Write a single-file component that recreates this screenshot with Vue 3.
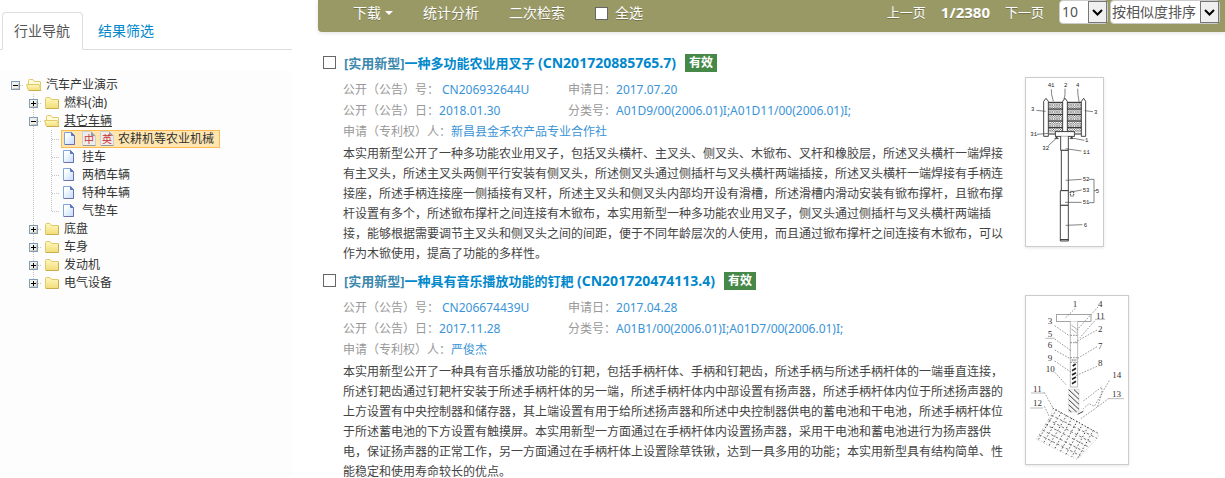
<script setup>
import { ref } from 'vue'

const tree = [
  { text: '汽车产业演示', cells: ['root'], icon: 'open' },
  { text: '燃料(油)', cells: ['none', 'plus'], icon: 'closed' },
  { text: '其它车辆', cells: ['none', 'minus'], icon: 'open', underline: true },
  { text: '农耕机等农业机械', cells: ['none', 'line', 'tee'], icon: 'doc', selected: true },
  { text: '挂车', cells: ['none', 'line', 'tee'], icon: 'doc' },
  { text: '两栖车辆', cells: ['none', 'line', 'tee'], icon: 'doc' },
  { text: '特种车辆', cells: ['none', 'line', 'tee'], icon: 'doc' },
  { text: '气垫车', cells: ['none', 'line', 'end'], icon: 'doc' },
  { text: '底盘', cells: ['none', 'plus'], icon: 'closed' },
  { text: '车身', cells: ['none', 'plus'], icon: 'closed' },
  { text: '发动机', cells: ['none', 'plus'], icon: 'closed' },
  { text: '电气设备', cells: ['none', 'last'], icon: 'closed' },
]

const vertical = { line: 18, tee: 18, plus: 18, minus: 18, end: 10, last: 10 }
const isSwitch = (c) => ['root', 'plus', 'minus', 'last'].includes(c)
const isOpen = (c) => c === 'root' || c === 'minus'

const results = [
  {
    id: 'r1',
    title: '一种多功能农业用叉子',
    number: '(CN201720885765.7)',
    pubNo: 'CN206932644U',
    applied: '2017.07.20',
    pubDate: '2018.01.30',
    classes: 'A01D9/00(2006.01)I;A01D11/00(2006.01)I;',
    owner: '新昌县金禾农产品专业合作社',
    text: '本实用新型公开了一种多功能农业用叉子，包括叉头横杆、主叉头、侧叉头、木锨布、叉杆和橡胶层，所述叉头横杆一端焊接有主叉头，所述主叉头两侧平行安装有侧叉头，所述侧叉头通过侧插杆与叉头横杆两端插接，所述叉头横杆一端焊接有手柄连接座，所述手柄连接座一侧插接有叉杆，所述主叉头和侧叉头内部均开设有滑槽，所述滑槽内滑动安装有锨布撑杆，且锨布撑杆设置有多个，所述锨布撑杆之间连接有木锨布，本实用新型一种多功能农业用叉子，侧叉头通过侧插杆与叉头横杆两端插接，能够根据需要调节主叉头和侧叉头之间的间距，便于不同年龄层次的人使用，而且通过锨布撑杆之间连接有木锨布，可以作为木锨使用，提高了功能的多样性。',
  },
  {
    id: 'r2',
    title: '一种具有音乐播放功能的钉耙',
    number: '(CN201720474113.4)',
    pubNo: 'CN206674439U',
    applied: '2017.04.28',
    pubDate: '2017.11.28',
    classes: 'A01B1/00(2006.01)I;A01D7/00(2006.01)I;',
    owner: '严俊杰',
    text: '本实用新型公开了一种具有音乐播放功能的钉耙，包括手柄杆体、手柄和钉耙齿，所述手柄与所述手柄杆体的一端垂直连接，所述钉耙齿通过钉耙杆安装于所述手柄杆体的另一端，所述手柄杆体内中部设置有扬声器，所述手柄杆体内位于所述扬声器的上方设置有中央控制器和储存器，其上端设置有用于给所述扬声器和所述中央控制器供电的蓄电池和干电池，所述手柄杆体位于所述蓄电池的下方设置有触摸屏。本实用新型一方面通过在手柄杆体内设置扬声器，采用干电池和蓄电池进行为扬声器供电，保证扬声器的正常工作，另一方面通过在手柄杆体上设置除草铁锹，达到一具多用的功能；本实用新型具有结构简单、性能稳定和使用寿命较长的优点。',
  },
]

const forkLabels = [
  ['41', 98, 51], ['2', 147, 51], ['4', 183, 51], ['3', 48, 122], ['3', 237, 131], ['31', 46, 198],
  ['32', 82, 239], ['1', 210, 216], ['11', 204, 251], ['52', 203, 333], ['53', 203, 365], ['51', 203, 403],
  ['5', 242, 368], ['6', 206, 470],
]
const rakeLabels = [
  ['1', 173, 67], ['4', 249, 67], ['3', 98, 117], ['11', 243, 101], ['5', 98, 157], ['2', 249, 140],
  ['6', 98, 188], ['7', 249, 192], ['9', 98, 227], ['8', 249, 242], ['10', 92, 262], ['14', 292, 279],
  ['11', 54, 320], ['13', 291, 335], ['12', 54, 364],
]

const pageSize = ref('10')
const order = ref('sim')
</script>

<template>
  <div class="page">
    <svg class="defs" width="0" height="0" aria-hidden="true">
      <defs>
        <linearGradient id="folder" x1="0" y1="0" x2="0" y2="1">
          <stop offset="0" stop-color="#fff8bd" />
          <stop offset="1" stop-color="#f1dc78" />
        </linearGradient>
        <linearGradient id="sheet" x1="0" y1="0" x2="1" y2="1">
          <stop offset="0.2" stop-color="#fff" />
          <stop offset="1" stop-color="#bfdcff" />
        </linearGradient>
      </defs>
    </svg>
    <aside class="side">
      <nav class="tabs">
        <a class="tab active" href="#nav">行业导航</a>
        <a class="tab" href="#filter">结果筛选</a>
      </nav>
      <ul class="tree">
        <li v-for="n in tree" :key="n.text" class="node">
          <svg v-for="(c, i) in n.cells" :key="i" class="cell" viewBox="0 0 18 18" shape-rendering="crispEdges">
            <path v-if="vertical[c]" :d="`M9.5 0V${vertical[c]}`" class="dots" />
            <path v-if="c !== 'none' && c !== 'line'" d="M10 9.5H18" class="dots" />
            <g v-if="isSwitch(c)">
              <rect x="5.5" y="5.5" width="8" height="8" fill="#f1f0ea" stroke="#7f9db9" />
              <path d="M7 12.5H13M12.5 7V13" stroke="#d0cabb" fill="none" />
              <path d="M7 9.5H12" stroke="#000" />
              <path v-if="!isOpen(c)" d="M9.5 7V12" stroke="#000" />
            </g>
          </svg>
          <a href="#node" class="label" :class="{ selected: n.selected, underline: n.underline }">
            <svg v-if="n.icon === 'closed'" class="icon" viewBox="0 0 18 18">
              <path d="M2.5 4.500q0-1 1-1H7l1.500 2h6.500q.5 0 .5.500v8q0 .5-.5.500H3q-.5 0-.5-.5z" fill="url(#folder)" stroke="#e0c96a" />
              <path d="M3 14.500H15.500V6" fill="none" stroke="#cdae4c" />
            </svg>
            <svg v-else-if="n.icon === 'open'" class="icon" viewBox="0 0 18 18">
              <path d="M3.500 12V4.500q0-1 1-1H8l1.500 2h5.500q.5 0 .5.500V13z" fill="#fffbd6" stroke="#e0c96a" />
              <path d="M1.500 8.500H14l2 5.500q0 .5-.5.500H4q-.6 0-.8-.5z" fill="url(#folder)" stroke="#e0c96a" />
              <path d="M4 14.500H16" stroke="#cdae4c" />
            </svg>
            <svg v-else class="icon" viewBox="0 0 18 18">
              <path d="M2.500 2.500H9.500L12.500 5.500V14.500H2.500z" fill="url(#sheet)" stroke="#7fa6dc" />
              <path d="M9.500 2.500V5.500H12.500z" fill="#5f78bd" stroke="#5f78bd" />
              <path d="M12.500 6V14.500H3" fill="none" stroke="#6f70a8" />
            </svg>
            <template v-if="n.selected">
              <svg v-for="g in ['中', '英']" :key="g" class="icon" viewBox="0 0 18 18">
                <path d="M2.500 1.500H11L15.500 6V15.500H2.500z" fill="#ececec" stroke="#cfcfcf" />
                <path d="M11 1.500V6H15.500z" fill="#9a9a9a" />
                <path d="M3 15.500H15.500" stroke="#999" />
                <text x="4" y="13" class="glyph">{{ g }}</text>
              </svg>
            </template>
            <span class="name">{{ n.text }}</span>
          </a>
        </li>
      </ul>
    </aside>

    <main class="main">
      <header class="bar">
        <div class="tools">
          <a href="#download" class="download">下载<i class="caret"></i></a>
          <a href="#stats">统计分析</a>
          <a href="#refine">二次检索</a>
          <label class="all"><input type="checkbox" class="check" />全选</label>
        </div>
        <div class="pager">
          <a href="#prev">上一页</a>
          <strong>1/2380</strong>
          <a href="#next">下一页</a>
          <div class="selects">
            <div class="pick small">
              <select v-model="pageSize" aria-label="每页条数"><option value="10">10</option></select>
              <svg class="arrow" viewBox="0 0 17 20"><path d="M4 8L8.500 12.500L13 8" /></svg>
            </div>
            <div class="pick">
              <select v-model="order" aria-label="排序"><option value="sim">按相似度排序</option></select>
              <svg class="arrow" viewBox="0 0 17 20"><path d="M4 8L8.500 12.500L13 8" /></svg>
            </div>
          </div>
        </div>
      </header>

      <article v-for="(r, i) in results" :key="r.id" class="item">
        <input :id="r.id" type="checkbox" class="check" :aria-label="r.title" />
        <div class="body">
          <h3 class="title">
            <a href="#detail"><span class="kind">[实用新型]</span>{{ r.title }} <span class="num">{{ r.number }}</span></a>
            <span class="badge">有效</span>
          </h3>
          <dl class="meta">
            <div><dt>公开（公告）号：</dt><dd class="spaced">{{ r.pubNo }}</dd></div>
            <div><dt>申请日：</dt><dd>{{ r.applied }}</dd></div>
            <div><dt>公开（公告）日：</dt><dd>{{ r.pubDate }}</dd></div>
            <div><dt>分类号：</dt><dd>{{ r.classes }}</dd></div>
            <div class="wide"><dt>申请（专利权）人：</dt><dd>{{ r.owner }}</dd></div>
          </dl>
          <p class="text">{{ r.text }}</p>
        </div>
        <div class="figure">
          <svg v-if="i === 0" class="fig fork" viewBox="33 24 231 504">
            <defs>
              <pattern id="hatch" width="7" height="7" patternUnits="userSpaceOnUse">
                <path d="M0 7L7 0M0 0L7 7" stroke="#555" stroke-width="1.500" />
              </pattern>
            </defs>
            <rect x="100" y="97" width="100" height="90" fill="url(#hatch)" />
            <path d="M100 97H200M100 117H200M100 134H200M100 153H200M100 173H200" stroke="#222" stroke-width="3" />
            <g fill="#fff" stroke="#222" stroke-width="2.500">
              <path d="M86 199V94l7-9l7 9V199z" />
              <path d="M199 199V94l7-9l6 9V199z" />
              <path d="M143 187V94l7-9l7 9V187z" />
              <rect x="121" y="185" width="57" height="14" />
              <path d="M137 199V241H160V199" />
              <path d="M139 241V362H160V241z" />
              <path d="M136 362H160V406H136z" />
              <path d="M136 406H160V513H136z" />
              <path d="M166 364h10v14h-10z" stroke-dasharray="4 2" />
            </g>
            <path d="M136 509H160M102 192H120M180 192H198" stroke="#222" stroke-width="3" />
            <path d="M119 206l6-6l6 6zM164 206l6-6l6 6z" fill="#333" stroke="#222" />
            <path d="M109 58l1 16l5 20M150 56v18l-3 14M188 56l1 20l4 24M64 121l28 3M209 122l25 3M66 193l34-3M100 227l22-20M176 205l32 6M152 236l47 7M152 331l48-3M163 367l37-7M150 397h50M152 466l50-2M222 328H237V398H222M237 362h6" fill="none" stroke="#444" stroke-width="2" />
            <text v-for="(l, k) in forkLabels" :key="k" :x="l[1]" :y="l[2]" class="fork-label">{{ l[0] }}</text>
          </svg>
          <svg v-else class="fig rake" viewBox="33 33 306 504">
            <g fill="#fff" stroke="#999" stroke-width="2">
              <rect x="124" y="89" width="104" height="20" stroke="#777" />
              <path d="M166 109V306H188V109" />
              <path d="M166 151H188M166 173H188M166 218H188M166 232H188" stroke="#555" stroke-dasharray="5 3" />
            </g>
            <path d="M169 120l16 12M169 132l16 12M169 225h16M172 223v6M180 223v6" stroke="#888" stroke-width="2" />
            <path d="M173 243l9-6M171 257l12-7M171 270l12-7M171 283l12-7M171 296l12-7" stroke="#222" stroke-width="5" />
            <path d="M161 313H192V381H161z" fill="#f5f5f5" stroke="#aaa" />
            <path d="M161 314l31 29M161 329l31 29M161 344l31 29M161 359l24 22M161 374l8 7M177 314l15 14" stroke="#444" stroke-width="3" />
            <path d="M181 70L150 100M249 66L183 138M244 102L195 158M246 135L180 172M119 122L164 153M119 162L168 197M119 195L164 220M246 185L188 220M119 228L172 264M246 244L183 272M119 262L153 299M283 287L261 324L247 366M282 340L247 366L196 402M205 348L260 306L261 324L238 364L222 356L205 371M88 322L114 369M88 364L104 396" fill="none" stroke="#666" stroke-width="2" stroke-dasharray="5 4" />
            <path d="M91 160H119M245 103H270M48 324H88M46 369H84M282 341H327" stroke="#999" stroke-width="2" />
            <path d="M113 369L251 447L247 460L186 524L64 463L109 388z" fill="#fafafa" stroke="#bbb" stroke-width="2" stroke-dasharray="4 5" />
            <g stroke="#444" stroke-width="3">
              <path d="M113 369L250 445M124 374L70 464M139 382L86 473M155 391L102 482M171 399L119 491M187 408L136 500M203 417L153 508M219 426L170 516M235 436L186 523" stroke-dasharray="4 6" />
              <path d="M108 390L246 460M100 404L231 473M91 418L219 485M82 435L206 499M72 449L196 512" stroke-dasharray="8 7" stroke="#777" />
              <path d="M188 388L205 379" />
            </g>
            <text v-for="(l, k) in rakeLabels" :key="k" :x="l[1]" :y="l[2]" class="rake-label">{{ l[0] }}</text>
          </svg>
        </div>
      </article>
    </main>
  </div>
</template>

<style>
body {
  background: #fff;
}
</style>

<style scoped>
.page {
  display: grid;
  grid-template-columns: 292px minmax(0, 1fr);
  column-gap: 26px;
  font: 12px/20px "Noto Sans", "Noto Sans CJK SC", sans-serif;
  color: #444;
}
.defs {
  position: absolute;
}
a {
  color: inherit;
  text-decoration: none;
}
.side {
  padding-top: 12px;
}
.tabs {
  display: flex;
  padding-left: 2px;
  border-bottom: 1px solid #ddd;
}
.tab {
  margin-bottom: -1px;
  padding: 8px 12px;
  border: 1px solid transparent;
  border-radius: 4px 4px 0 0;
  font-size: 14px;
  color: #08c;
}
.tab.active {
  padding: 8px 12px 8px 11px;
  color: #555;
  background: #fff;
  border-color: #ddd;
  border-bottom-color: #fff;
}
.tab + .tab {
  margin-left: 2px;
}
.tree {
  margin: 20px 0 0;
  padding: 6px 6px 12px;
  min-height: 390px;
  list-style: none;
  background: #fdfdfd;
  border-radius: 4px;
}
.node {
  display: flex;
  height: 18px;
}
.cell {
  width: 18px;
  height: 18px;
}
.dots {
  fill: none;
  stroke: #c4c4c4;
  stroke-dasharray: 1 1;
}
.label {
  display: flex;
  align-items: center;
  height: 18px;
  padding-left: 1px;
  line-height: 18px;
  color: #333;
}
.icon {
  width: 18px;
  height: 18px;
}
.name {
  padding-left: 3px;
}
.underline .name {
  text-decoration: underline;
}
.selected {
  box-sizing: border-box;
  margin-left: 1px;
  padding: 0 5px 0 0;
  border: 1px solid #ffb951;
  background: #ffe6b0;
}
.selected .name {
  padding-left: 2px;
}
.glyph {
  font: 10px "Noto Sans CJK SC", sans-serif;
  fill: #c33;
}
.bar {
  display: flex;
  justify-content: space-between;
  align-items: flex-start;
  height: 32px;
  padding: 0 5px 0 35px;
  box-sizing: border-box;
  border-radius: 0 0 0 4px;
  background: #996;
  color: #fff;
  font-size: 14px;
  box-shadow: 0 1px 4px rgba(0, 0, 0, 0.12);
  text-shadow: 0 1px 0 rgba(0, 0, 0, 0.25);
}
.tools {
  display: flex;
  gap: 30px;
  padding-top: 3px;
}
.download,
.all {
  display: flex;
  align-items: center;
}
.caret {
  margin-left: 4px;
  border: 4px solid transparent;
  border-top-color: #fff;
  border-bottom: 0;
}
.all {
  gap: 7px;
}
.check {
  appearance: none;
  box-sizing: border-box;
  width: 13px;
  height: 13px;
  margin: 0;
  border: 1px solid #666;
  background: #fff;
}
.check:checked {
  background: #08c;
}
.pager {
  display: flex;
  align-items: center;
  gap: 15px;
  height: 24px;
  font-size: 13px;
}
.pager strong {
  font-size: 15px;
}
.selects {
  display: flex;
  gap: 2px;
}
.pick {
  position: relative;
}
.pick select {
  display: block;
  appearance: none;
  box-sizing: border-box;
  height: 24px;
  width: 110px;
  padding: 0 20px 0 1px;
  border: 1px solid #ccc;
  border-radius: 4px;
  background: #fff;
  color: #555;
  font: 14px/20px "Noto Sans", "Noto Sans CJK SC", sans-serif;
}
.pick.small select {
  width: 49px;
  padding-left: 2px;
}
.arrow {
  position: absolute;
  top: 1px;
  right: 1px;
  box-sizing: border-box;
  width: 19px;
  height: 22px;
  border: 1px solid #777;
  background: #f0f0f0;
  pointer-events: none;
}
.arrow path {
  fill: none;
  stroke: #000;
  stroke-width: 2;
}
.item {
  display: grid;
  grid-template-columns: 13px minmax(0, 1fr) 200px;
  padding-left: 5px;
  height: 218px;
}
.item:first-of-type {
  margin-top: 21px;
}
.item > .check {
  margin-top: 3px;
}
.body {
  padding: 0 20px 0 7px;
}
.title {
  display: flex;
  align-items: center;
  gap: 9px;
  height: 20px;
  margin: 0 0 6px;
  padding-left: 1px;
  font-size: 13px;
  line-height: 20px;
  color: #08c;
}
.kind {
  color: #3a87ad;
}
.num {
  font-size: 14px;
}
.badge {
  padding: 0 4px;
  font-size: 12px;
  line-height: 18px;
  color: #fff;
  background: #468847;
}
.meta {
  display: grid;
  grid-template-columns: 225px minmax(0, 1fr);
  grid-auto-rows: 21px;
  margin: 0;
  line-height: 21px;
}
.meta div {
  display: flex;
  white-space: nowrap;
}
.meta .wide {
  grid-column: 1 / -1;
}
.meta dt {
  color: #999;
}
.meta dd {
  margin: 0;
  color: #3a94d8;
}
.meta .spaced {
  padding-left: 3px;
}
.text {
  margin: 2px 0 0;
}
.figure {
  padding-top: 24px;
}
.fig {
  display: block;
  height: 168px;
  border: 1px solid #ccc;
  background: #fff;
  box-shadow: 0 1px 3px rgba(0, 0, 0, 0.1);
}
.fork {
  width: 77px;
}
.rake {
  width: 102px;
}
.fork-label {
  font: 17px "Liberation Mono", monospace;
  fill: #222;
}
.rake-label {
  font: 27px "Liberation Serif", serif;
  fill: #333;
}
</style>
